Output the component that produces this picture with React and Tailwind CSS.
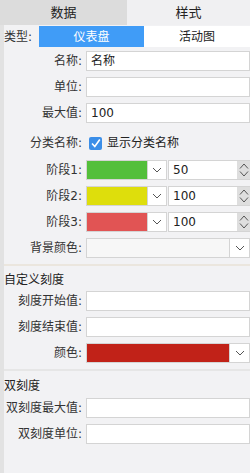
import { useState } from "react";

const font = { fontFamily: '"DejaVu Sans", "Noto Sans CJK SC", sans-serif' };

const Chevron = () => (
  <svg width="10" height="6" viewBox="0 0 10 6" fill="none">
    <path d="M1 1l4 4 4-4" stroke="#555" strokeWidth="1" />
  </svg>
);

const Spinner = () => (
  <div className="w-[13px] h-full bg-[#dedede] flex flex-col items-center justify-center gap-[2px]">
    <svg width="10" height="6" viewBox="0 0 10 6" fill="none">
      <path d="M1 5.5l4-4.5 4 4.5" stroke="#555" strokeWidth="1" />
    </svg>
    <svg width="10" height="6" viewBox="0 0 10 6" fill="none">
      <path d="M1 0.5l4 4.5 4-4.5" stroke="#555" strokeWidth="1" />
    </svg>
  </div>
);

const Row = ({ label, children, className = "" }) => (
  <div className={`flex items-center h-[20px] ${className}`}>
    <div className="w-[78px] text-right text-[12px] text-[#333] whitespace-nowrap">{label}</div>
    <div className="ml-[4px] flex-1 flex h-full">{children}</div>
  </div>
);

const TextInput = ({ value }) => (
  <div className="flex-1 h-full bg-white border border-[#d4d4d4] px-[4px] text-[12px] text-[#222] flex items-center">
    {value}
  </div>
);

const ColorPick = ({ color }) => (
  <div className="flex h-full">
    <div className="w-[62px] h-full border border-[#d4d4d4]" style={{ background: color }} />
    <div className="w-[19px] h-full bg-white border border-l-0 border-[#d4d4d4] flex items-center justify-center">
      <Chevron />
    </div>
  </div>
);

const Stage = ({ label, color, value }) => (
  <Row label={label}>
    <ColorPick color={color} />
    <div className="ml-[1px] flex-1 flex h-full bg-white border border-r-0 border-[#d4d4d4]">
      <div className="flex-1 px-[4px] flex items-center text-[12px] text-[#222]">{value}</div>
      <Spinner />
    </div>
  </Row>
);

const Select = ({ color }) => (
  <div className="flex-1 flex h-full border border-[#d4d4d4] bg-white">
    <div className="flex-1 h-full" style={{ background: color || "#f7f7f7" }} />
    <div className="w-[20px] h-full bg-white border-l border-[#d4d4d4] flex items-center justify-center">
      <Chevron />
    </div>
  </div>
);

export default function App() {
  const [tab, setTab] = useState("data");
  const [type, setType] = useState("gauge");

  return (
    <div className="w-[250px] h-[473px] bg-[#f2f2f4] flex flex-col overflow-hidden" style={font}>
      <div className="flex h-[25px] text-[13px] text-[#222]">
        <button
          onClick={() => setTab("data")}
          className={`w-[127px] ${tab === "data" ? "bg-[#dcdcdc]" : "bg-[#f0f0f2]"}`}
        >
          数据
        </button>
        <button
          onClick={() => setTab("style")}
          className={`flex-1 ${tab === "style" ? "bg-[#dcdcdc]" : "bg-[#f0f0f2]"}`}
        >
          样式
        </button>
      </div>

      <div className="flex flex-1">
        <div className="w-[4px] bg-[#e2e2e2]" />
        <div className="flex-1 flex flex-col">
          <div className="flex items-center h-[21px] mt-[1px]">
            <div className="w-[35px] text-[12px] text-[#333]">类型:</div>
            <div className="flex flex-1 h-full text-[12px]">
              <button
                onClick={() => setType("gauge")}
                className={`w-[105px] ${type === "gauge" ? "bg-[#409cf7] text-white" : "bg-white text-[#222]"}`}
              >
                仪表盘
              </button>
              <button
                onClick={() => setType("activity")}
                className={`flex-1 ${type === "activity" ? "bg-[#409cf7] text-white" : "bg-white text-[#222]"}`}
              >
                活动图
              </button>
            </div>
          </div>

          <div className="flex flex-col gap-[6px] mt-[4px]">
            <Row label="名称:"><TextInput value="名称" /></Row>
            <Row label="单位:"><TextInput value="" /></Row>
            <Row label="最大值:"><TextInput value="100" /></Row>
          </div>

          <Row label="分类名称:" className="mt-[10px]">
            <div className="flex items-center gap-[5px] ml-[3px] text-[12px] text-[#222]">
              <div className="w-[13px] h-[13px] bg-[#3b8ee8] rounded-[2px] flex items-center justify-center">
                <svg width="10" height="9" viewBox="0 0 10 9" fill="none">
                  <path d="M1 4.5l2.8 3 5-7" stroke="white" strokeWidth="1.6" />
                </svg>
              </div>
              显示分类名称
            </div>
          </Row>

          <div className="flex flex-col gap-[6px] mt-[7px]">
            <Stage label="阶段1:" color="#53bf3b" value="50" />
            <Stage label="阶段2:" color="#dede0c" value="100" />
            <Stage label="阶段3:" color="#e15454" value="100" />
            <Row label="背景颜色:"><Select color="#f7f7f7" /></Row>
          </div>

          <div className="h-[2px] bg-[#ebe6de] mt-[6px]" />
          <div className="text-[12px] text-[#222] mt-[5px] h-[17px]">自定义刻度</div>
          <div className="flex flex-col gap-[6px] mt-[3px]">
            <Row label="刻度开始值:"><TextInput value="" /></Row>
            <Row label="刻度结束值:"><TextInput value="" /></Row>
            <Row label="颜色:"><Select color="#c12218" /></Row>
          </div>

          <div className="h-[2px] bg-[#e6e6e6] mt-[6px]" />
          <div className="text-[12px] text-[#222] mt-[6px] h-[17px]">双刻度</div>
          <div className="flex flex-col gap-[6px] mt-[4px]">
            <Row label="双刻度最大值:"><TextInput value="" /></Row>
            <Row label="双刻度单位:"><TextInput value="" /></Row>
          </div>
        </div>
      </div>
    </div>
  );
}
